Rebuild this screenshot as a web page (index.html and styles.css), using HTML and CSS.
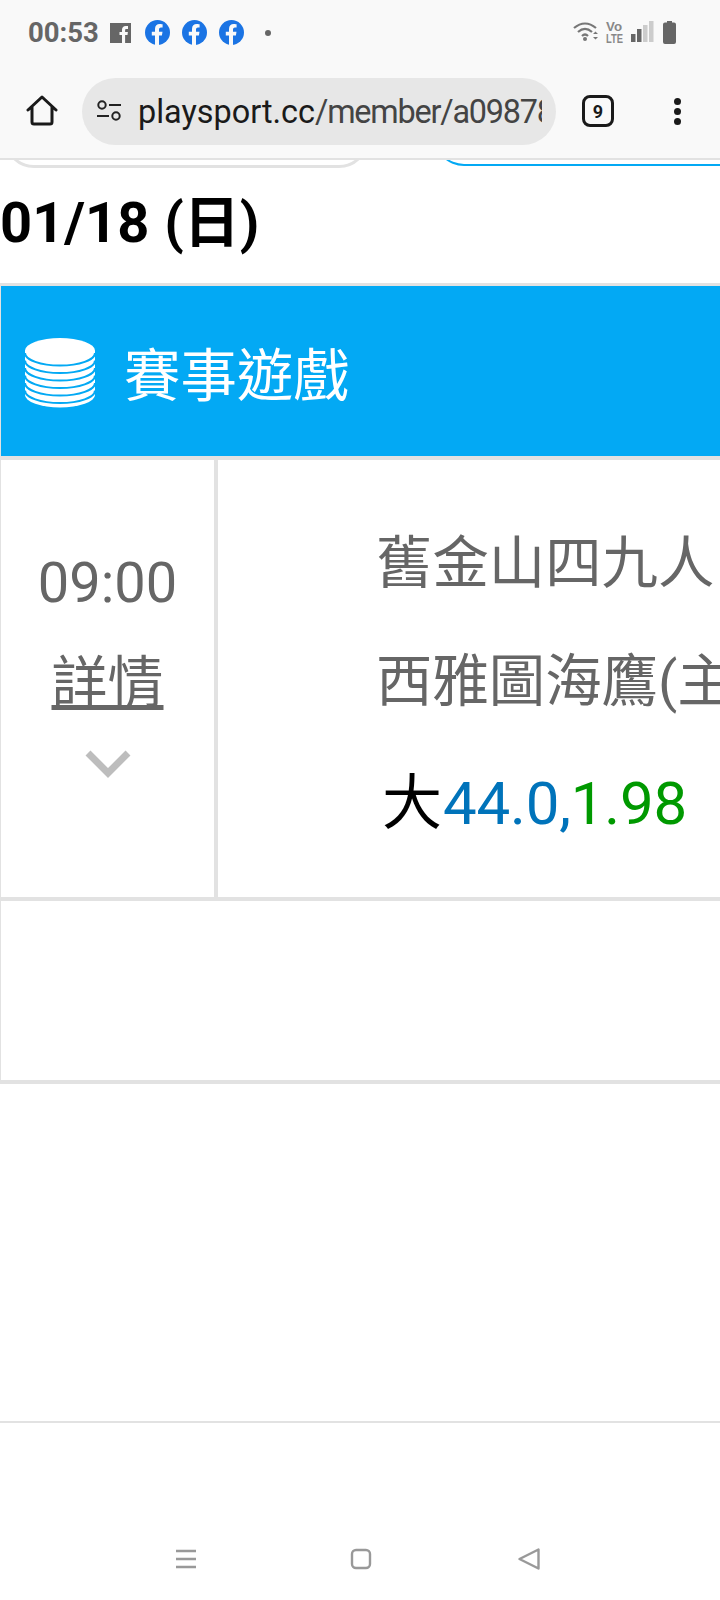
FILE: index.html
```html
<!DOCTYPE html>
<html>
<head>
  <meta charset="utf-8">
  <title>playsport.cc</title>
  <link rel="stylesheet" href="styles.css">
</head>
<body>
  <div class="phone">
    <div class="status-bar">
      <span class="clock">00:53</span>
      <svg class="notif-icons" width="170" height="30" viewBox="0 0 170 30">
        <rect x="0" y="5" width="21" height="20" fill="#666"/>
        <path d="M12 25v-8h-2.500v-3h2.500v-2.200c0-2.500 1.500-3.800 3.700-3.800h2.300v3h-1.500c-1 0-1.400.5-1.400 1.300v1.700h2.800l-.4 3h-2.400v8z" fill="#f9f9f9"/>
        <g>
          <circle cx="47.500" cy="14.500" r="12.500" fill="#1b74e4"/>
          <path d="M45 27v-9.500h-3.200v-3.700h3.200v-2.800c0-3.200 1.900-5 4.800-5 1.400 0 2.800.3 2.800.3v3.100h-1.600c-1.500 0-2 1-2 2v2.400h3.500l-.6 3.700h-2.900v9.500z" fill="#f9f9f9"/>
        </g>
        <g transform="translate(37 0)">
          <circle cx="47.500" cy="14.500" r="12.500" fill="#1b74e4"/>
          <path d="M45 27v-9.500h-3.200v-3.700h3.200v-2.800c0-3.200 1.900-5 4.800-5 1.400 0 2.800.3 2.800.3v3.100h-1.600c-1.500 0-2 1-2 2v2.400h3.500l-.6 3.700h-2.900v9.500z" fill="#f9f9f9"/>
        </g>
        <g transform="translate(74 0)">
          <circle cx="47.500" cy="14.500" r="12.500" fill="#1b74e4"/>
          <path d="M45 27v-9.500h-3.200v-3.700h3.200v-2.800c0-3.200 1.900-5 4.800-5 1.400 0 2.800.3 2.800.3v3.100h-1.600c-1.500 0-2 1-2 2v2.400h3.500l-.6 3.700h-2.900v9.500z" fill="#f9f9f9"/>
        </g>
        <circle cx="158" cy="15" r="3" fill="#666"/>
      </svg>
      <svg class="sys-icons" width="106" height="26" viewBox="0 0 106 26">
        <!-- wifi -->
        <path d="M1 8c7-6 15-6 22 0M5 12c4.500-4 9.500-4 14 0M9 16c2-2 4-2 6 0" fill="none" stroke="#777" stroke-width="2.200"/>
        <circle cx="12" cy="19" r="2" fill="#777"/>
        <path d="M20 14l2.500-2.500 2.500 2.500zM20 17h5l-2.500 2.500z" fill="#777"/>
        <!-- volte -->
        <text class="volte" x="33" y="11" textLength="16" lengthAdjust="spacingAndGlyphs">Vo</text>
        <text class="volte" x="33" y="23" textLength="17" lengthAdjust="spacingAndGlyphs">LTE</text>
        <!-- signal -->
        <rect x="58" y="14" width="4.500" height="8" fill="#666"/>
        <rect x="64" y="9" width="4.500" height="13" fill="#666"/>
        <rect x="70" y="5" width="4.500" height="17" fill="#ccc"/>
        <rect x="76" y="1" width="4.500" height="21" fill="#ccc"/>
        <!-- battery -->
        <path d="M90 4.500a2 2 0 0 1 2-2h2v-1.500h5v1.500h2a2 2 0 0 1 2 2v17.500a2 2 0 0 1-2 2h-9a2 2 0 0 1-2-2z" fill="#666"/>
      </svg>
    </div>

    <div class="toolbar">
      <svg class="home-icon" width="32" height="32" viewBox="0 0 32 32">
        <path d="M2 15L16 2l14 13M6 12v15a2 2 0 0 0 2 2h16a2 2 0 0 0 2-2V12" fill="none" stroke="#1a1a1a" stroke-width="3" stroke-linejoin="round" stroke-linecap="round"/>
      </svg>
      <div class="url-pill">
        <svg class="tune-icon" width="26" height="22" viewBox="0 0 26 22">
          <circle cx="6" cy="5" r="3.700" fill="none" stroke="#222" stroke-width="2"/>
          <path d="M13 5h12M1 16h12" stroke="#222" stroke-width="2"/>
          <circle cx="20" cy="16" r="3.700" fill="none" stroke="#222" stroke-width="2"/>
        </svg>
        <div class="url-text"><span class="url-host">playsport.cc</span><span class="url-path">/member/a09878</span></div>
      </div>
      <div class="tab-count">9</div>
      <div class="menu-dots"><i></i><i></i><i></i></div>
    </div>

    <div class="page">
      <div class="peek-row">
        <div class="peek-btn peek-grey"></div>
        <div class="peek-btn peek-blue"></div>
      </div>
      <div class="date-title">01/18 (日)</div>

      <div class="game-table">
        <div class="game-head">
          <svg class="coins-icon" width="70" height="70" viewBox="0 0 70 70">
            <path d="M0 12.500v44.500a35 12.500 0 0 0 70 0V12.500z" fill="#fff"/>
            <ellipse cx="35" cy="12.500" rx="35" ry="12.500" fill="#fff"/>
            <path d="M0 15a35 12.500 0 0 0 70 0M0 22.500a35 12.500 0 0 0 70 0M0 30a35 12.500 0 0 0 70 0M0 37.500a35 12.500 0 0 0 70 0M0 45a35 12.500 0 0 0 70 0M0 52.500a35 12.500 0 0 0 70 0" fill="none" stroke="#03a9f4" stroke-width="2"/>
          </svg>
          <span>賽事遊戲</span>
        </div>
        <div class="game-row">
          <div class="time-cell">
            <div class="game-time">09:00</div>
            <a class="detail-link">詳情</a>
            <svg class="chevron" width="46" height="28" viewBox="0 0 46 28">
              <path d="M3 3l20 20L43 3" fill="none" stroke="#bdbdbd" stroke-width="7"/>
            </svg>
          </div>
          <div class="info-cell">
            <div class="team">舊金山四九人</div>
            <div class="team">西雅圖海鷹(主)</div>
            <div class="odds">大<span class="odds-line">44.0,</span><span class="odds-rate">1.98</span></div>
          </div>
        </div>
        <div class="empty-row"></div>
      </div>
    </div>

    <div class="nav-bar">
      <svg width="22" height="20" viewBox="0 0 22 20">
        <path d="M1 2h20M1 10h20M1 18h20" stroke="#999" stroke-width="2.400"/>
      </svg>
      <svg class="nav-home" width="22" height="22" viewBox="0 0 22 22">
        <rect x="2" y="2" width="18" height="18" rx="4" fill="none" stroke="#999" stroke-width="2.400"/>
      </svg>
      <svg width="24" height="24" viewBox="0 0 24 24">
        <path d="M21.500 2.500v19L2.500 12z" fill="none" stroke="#999" stroke-width="2.400" stroke-linejoin="round"/>
      </svg>
    </div>
  </div>
</body>
</html>
```

FILE: styles.css
```css
/* page */
body {
  margin: 0;
  background: #fff;
  font-family: Roboto, "Noto Sans CJK TC", sans-serif;
}
.phone {
  width: 720px;
  height: 1600px;
  display: flex;
  flex-direction: column;
  overflow: hidden;
}

/* status bar */
.status-bar {
  height: 64px;
  padding: 0 41px 0 28px;
  background: #f9f9f9;
  display: flex;
  align-items: center;
  box-sizing: border-box;
}
.clock {
  font-size: 27.5px;
  font-weight: 700;
  color: #666;
  width: 82px;
}
.notif-icons {
  margin-top: 1px;
}
.sys-icons {
  margin-left: auto;
  margin-top: 1px;
}
.volte {
  font-family: "Liberation Sans", sans-serif;
  font-size: 13px;
  font-weight: 700;
  fill: #888;
}

/* browser toolbar */
.toolbar {
  height: 96px;
  background: #f9f9f9;
  border-bottom: 2px solid #e2e2e2;
  display: flex;
  align-items: center;
  box-sizing: border-box;
}
.home-icon {
  margin-left: 26px;
}
.url-pill {
  margin-left: 24px;
  width: 474px;
  height: 67px;
  padding: 0 14px 0 14px;
  background: #e7e7e7;
  border-radius: 34px;
  display: flex;
  align-items: center;
  box-sizing: border-box;
}
.tune-icon {
  flex: none;
}
.url-text {
  margin: 1px 0 0 16px;
  font-size: 32.4px;
  white-space: nowrap;
  overflow: hidden;
}
.url-host {
  color: #1a1a1a;
}
.url-path {
  color: #444;
  letter-spacing: -1.2px;
}
.tab-count {
  margin-left: 26px;
  width: 32px;
  height: 32px;
  border: 3px solid #1a1a1a;
  border-radius: 8px;
  font-size: 18px;
  font-weight: 700;
  color: #1a1a1a;
  display: flex;
  align-items: center;
  justify-content: center;
  box-sizing: border-box;
}
.menu-dots {
  margin-left: 60px;
  display: flex;
  flex-direction: column;
  gap: 3px;
}
.menu-dots i {
  width: 7px;
  height: 7px;
  border-radius: 50%;
  background: #1a1a1a;
}

/* content */
.page {
  flex: 1;
}
.peek-row {
  height: 8px;
  overflow: hidden;
  display: flex;
  align-items: flex-end;
  justify-content: space-between;
  padding-left: 4px;
}
.peek-btn {
  height: 40px;
  border-radius: 0 0 30px 30px;
  box-sizing: border-box;
}
.peek-grey {
  width: 365px;
  border: 3px solid #e2e2e2;
}
.peek-blue {
  width: 286px;
  margin-bottom: 2px;
  border: 2px solid #03a9f4;
  border-right: none;
  border-radius: 0 0 0 30px;
}
.date-title {
  height: 115px;
  line-height: 110px;
  font-size: 56px;
  font-weight: 700;
  word-spacing: 1px;
  color: #000;
  white-space: nowrap;
}

/* game table */
.game-table {
  border-top: 3px solid #e2e2e2;
  border-left: 1px solid #e2e2e2;
}
.game-head {
  height: 170px;
  padding-left: 24px;
  background: #03a9f4;
  color: #fff;
  font-size: 56.4px;
  display: flex;
  align-items: center;
  gap: 29px;
}
.coins-icon {
  margin-top: 3px;
}
.game-row {
  display: flex;
  height: 437px;
  border-top: 4px solid #e2e2e2;
  border-bottom: 4px solid #e2e2e2;
}
.time-cell {
  width: 213px;
  flex: none;
  border-right: 4px solid #e2e2e2;
  display: flex;
  flex-direction: column;
  align-items: center;
  color: #666;
  font-size: 56px;
}
.game-time {
  margin-top: 90px;
  line-height: 66px;
}
.detail-link {
  margin-top: 34px;
  line-height: 66px;
  text-decoration: underline;
}
.chevron {
  margin-top: 34px;
}
.info-cell {
  padding: 45px 0 0 158px;
  font-size: 56.4px;
  line-height: 118px;
  white-space: nowrap;
  color: #666;
  overflow: hidden;
}
.odds {
  margin-top: 4px;
  padding-left: 6px;
  color: #000;
  font-size: 60px;
}
.odds-line {
  margin-left: 1px;
  color: #0073ba;
  letter-spacing: -0.2px;
}
.odds-rate {
  color: #009900;
  letter-spacing: -0.2px;
}
.empty-row {
  height: 179px;
  border-bottom: 4px solid #e2e2e2;
}

/* android nav */
.nav-bar {
  height: 179px;
  border-top: 2px solid #e2e2e2;
  padding: 115px 179px 20px 175px;
  display: flex;
  align-items: center;
  justify-content: space-between;
  box-sizing: border-box;
}
.nav-home {
  margin-left: 8px;
}
```
